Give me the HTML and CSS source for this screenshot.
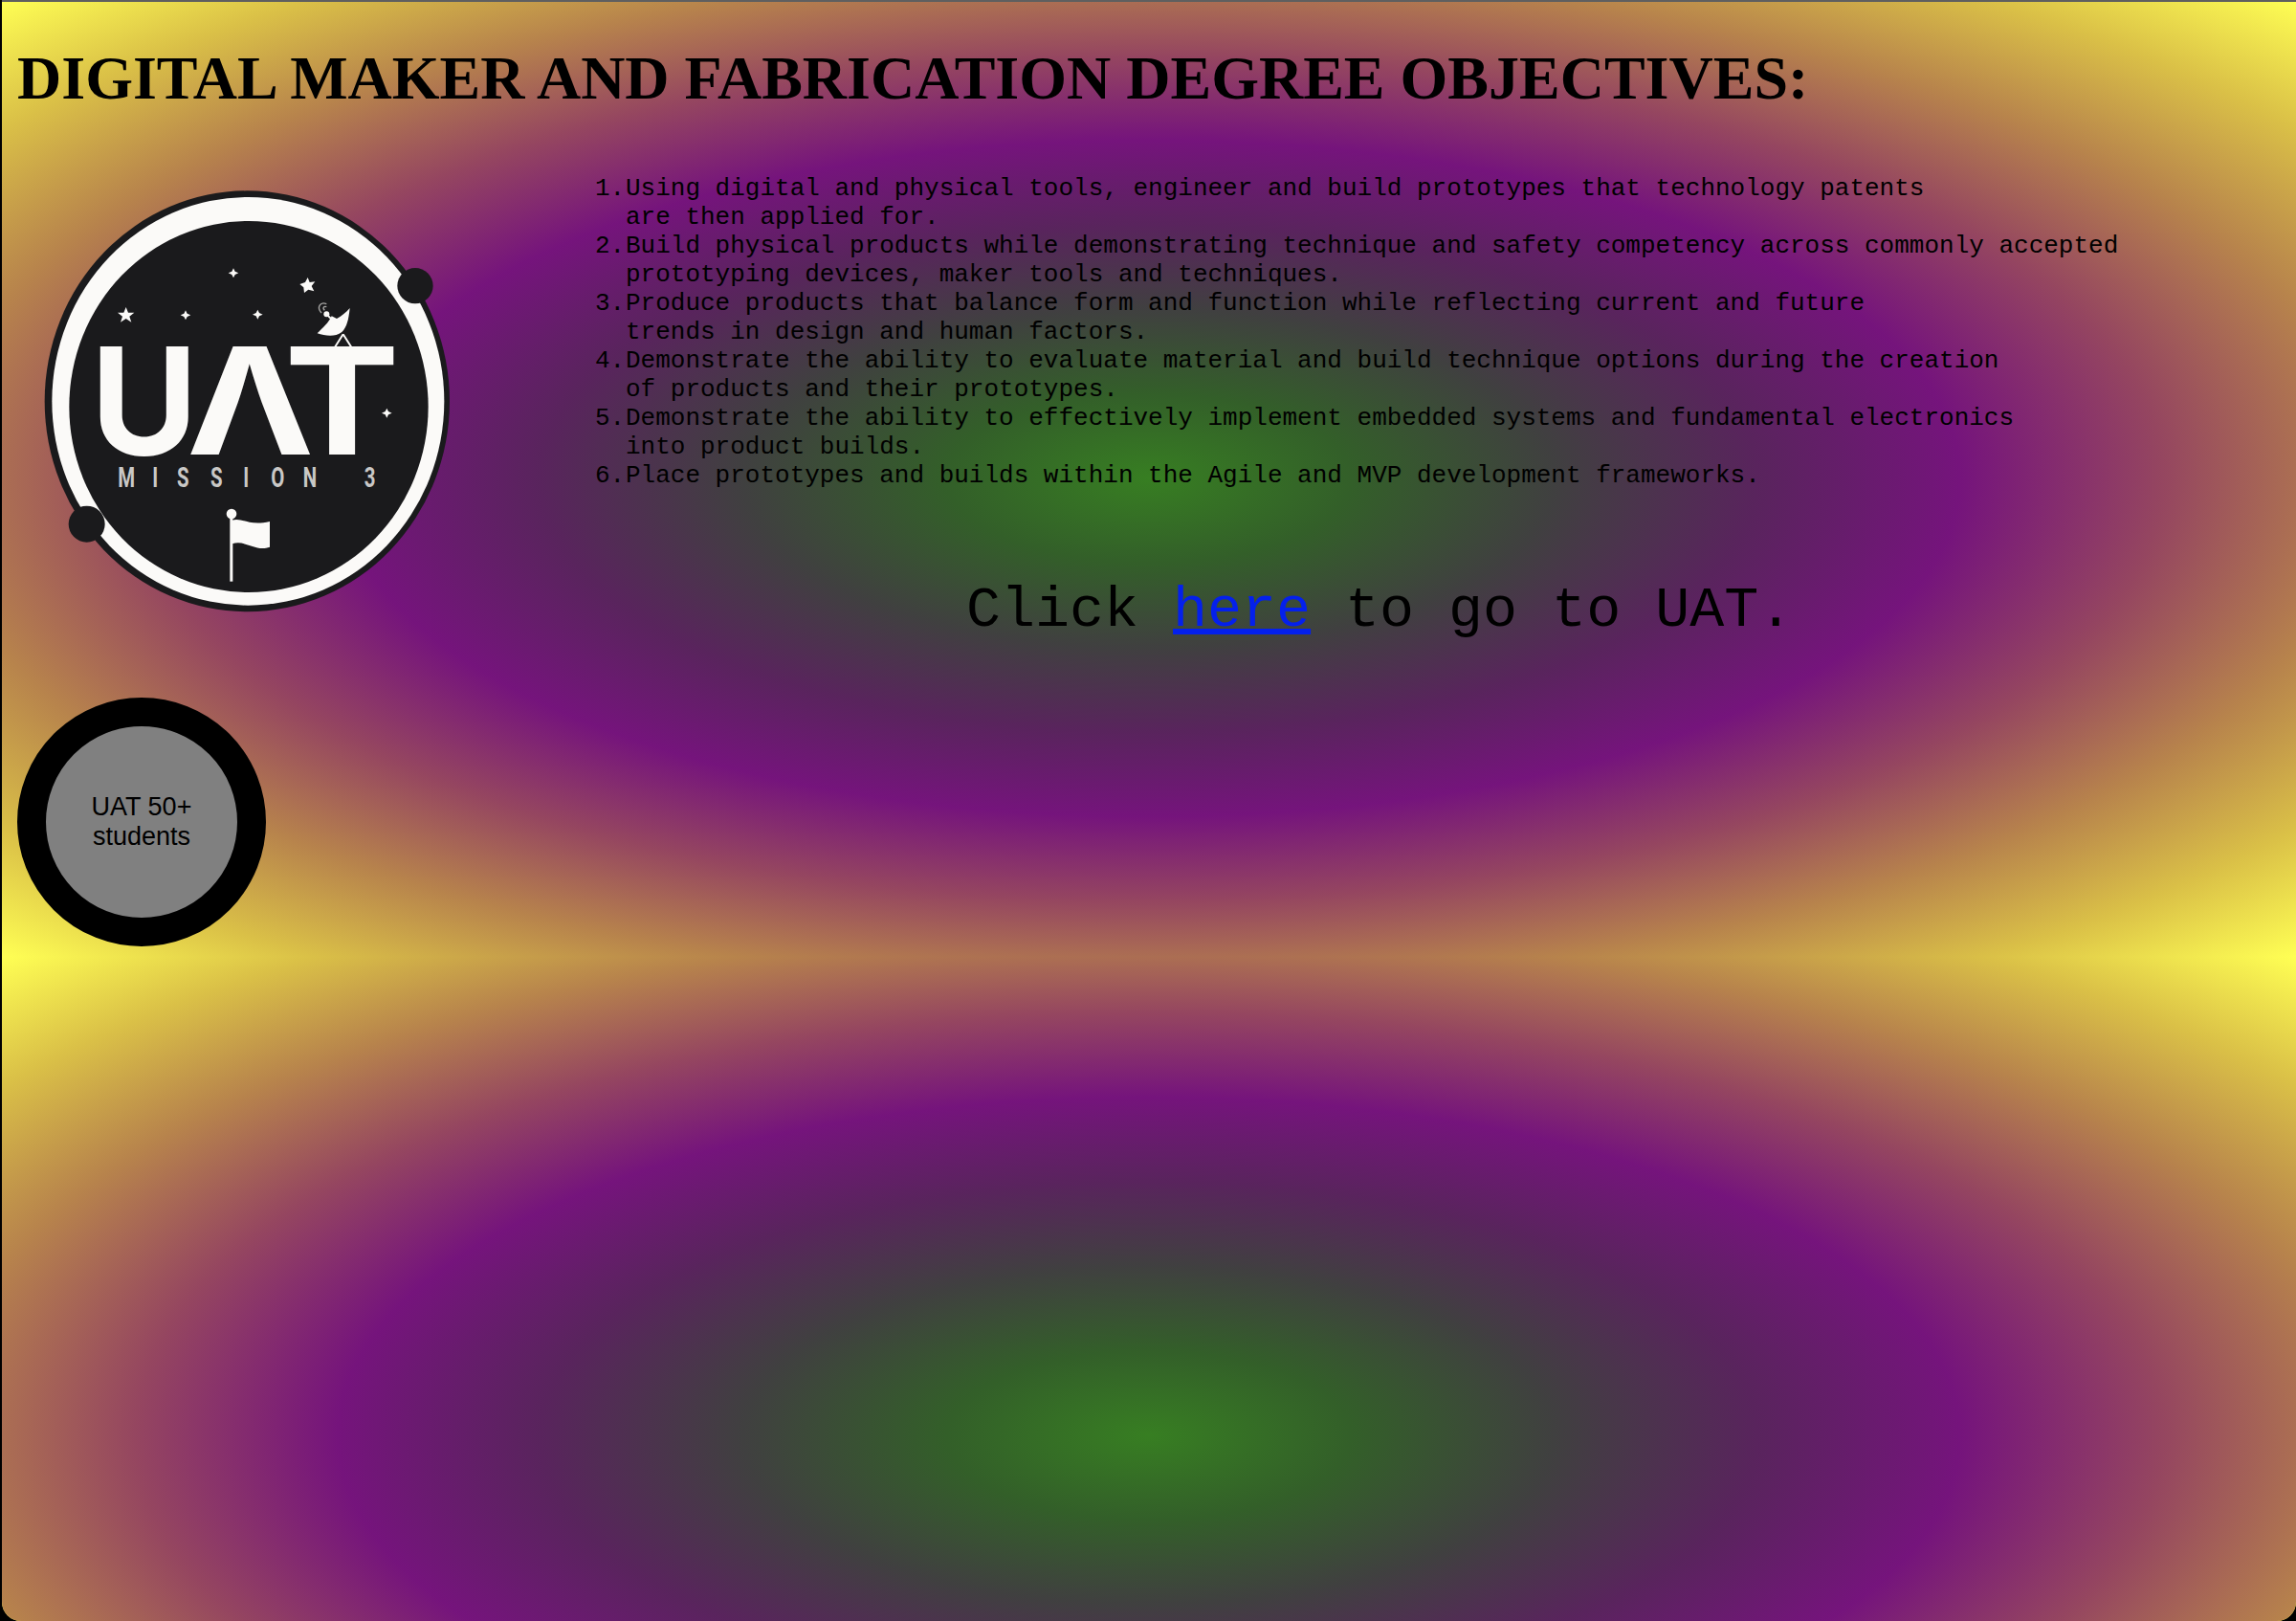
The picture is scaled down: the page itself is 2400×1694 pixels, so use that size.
FILE: index.html
```html
<!DOCTYPE html>
<html lang="en">
<head>
<meta charset="utf-8">
<title>Digital Maker and Fabrication Degree Objectives</title>
<link rel="stylesheet" href="styles.css">
</head>
<body>
<h1 class="title">DIGITAL MAKER AND FABRICATION DEGREE OBJECTIVES:</h1>
<div class="columns">
  <div class="side">
    <svg class="logo" viewBox="120 60 1320 1380" role="img" aria-label="UAT Mission 3">
      <ellipse class="ink" cx="775" cy="745" rx="635" ry="660"/>
      <ellipse class="paper" cx="778" cy="745" rx="615" ry="640"/>
      <ellipse class="ink" cx="780" cy="762" rx="563" ry="582"/>
      <circle class="ink" cx="1302" cy="383" r="56"/>
      <circle class="ink" cx="272" cy="1130" r="57"/>
      <text class="logo-big" x="284" y="912" textLength="336" lengthAdjust="spacingAndGlyphs">U</text>
      <text class="logo-big" x="585" y="912" textLength="400" lengthAdjust="spacingAndGlyphs">Λ</text>
      <text class="logo-big" x="892" y="912" textLength="362" lengthAdjust="spacingAndGlyphs">T</text>
      <text class="logo-small" y="1015" transform="scale(.68 1)" x="544 703 816 971 1122 1250 1397 1600 1680">MISSION 3</text>
      <polygon class="paper" points="395,450 402,467 421,467 406,479 412,497 395,486 378,497 384,479 369,467 388,467"/>
      <polygon class="paper" points="965,357 971,372 988,370 977,384 985,400 967,395 954,405 952,388 940,378 957,372"/>
      <path class="paper" d="M732 328l5 10 11 5-11 5-5 10-5-10-11-5 11-5zM582 460l5 10 11 5-11 5-5 10-5-10-11-5 11-5zM808 458l5 10 11 5-11 5-5 10-5-10-11-5 11-5zM1213 767l5 10 11 5-11 5-5 10-5-10-11-5 11-5z"/>
      <path class="paper" d="M1097 453C1093 490 1088 512 1072 528C1050 545 1020 540 995 532C1012 515 1030 500 1040 478L1056 486C1072 478 1085 466 1097 453Z"/>
      <circle class="paper" cx="1024" cy="472" r="9"/>
      <path class="logo-line" d="M1024 472L1050 498M1076 535L1044 585M1076 535L1108 585"/>
      <path class="logo-wave" d="M1008 468C992 450 1004 432 1024 440M1018 460C1010 452 1016 446 1024 449"/>
      <rect class="paper" x="721" y="1100" width="9" height="210"/>
      <circle class="paper" cx="726" cy="1098" r="16"/>
      <path class="paper" d="M728 1118C760 1108 780 1138 846 1122V1202C800 1218 770 1178 728 1192Z"/>
    </svg>
    <div class="badge">UAT 50+<br>students</div>
  </div>
  <div class="content">
    <ol class="objectives">
      <li>Using digital and physical tools, engineer and build prototypes that technology patents<br>are then applied for.</li>
      <li>Build physical products while demonstrating technique and safety competency across commonly accepted<br>prototyping devices, maker tools and techniques.</li>
      <li>Produce products that balance form and function while reflecting current and future<br>trends in design and human factors.</li>
      <li>Demonstrate the ability to evaluate material and build technique options during the creation<br>of products and their prototypes.</li>
      <li>Demonstrate the ability to effectively implement embedded systems and fundamental electronics<br>into product builds.</li>
      <li>Place prototypes and builds within the Agile and MVP development frameworks.</li>
    </ol>
    <p class="cta">Click <a class="cta-link" href="#">here</a> to go to UAT.</p>
  </div>
</div>
</body>
</html>
```
FILE: styles.css
```css
html {
  background: #000;
  height: 100%;
}

body {
  box-sizing: border-box;
  height: 1694px;
  margin: 0 0 0 2px;
  padding: 0 16px;
  border-top: 2px solid #5f5f5f;
  border-radius: 0 0 20px 20px;
  overflow: hidden;
  background-color: #ffff54;
  background-image: radial-gradient(#377e22, #335f29 12.5%, #404040 25%, #59245d 37.5%, #75147c 50%, #954660 62.5%, #b7834c 75%, #dac047 87.5%, #ffff54);
  background-size: 100% 1000px;
  background-repeat: repeat-y;
  background-origin: border-box;
  color: #000;
}

.title {
  margin: 43px 0 0;
  font: bold 64px/74px "Liberation Serif", "Times New Roman", serif;
  white-space: nowrap;
}

.columns {
  display: flex;
  align-items: flex-start;
}

.side {
  display: flex;
  flex: 0 0 604px;
  flex-direction: column;
  align-items: flex-start;
}

.logo {
  display: block;
  width: 440px;
  height: 460px;
  margin: 72px 0 0 22px;
}

.ink { fill: #1a1a1c; }
.paper { fill: #fbfaf8; }

.logo-big {
  fill: #fbfaf8;
  font: 700 468px "Inter", "Liberation Sans", sans-serif;
}

.logo-small {
  fill: #c9c8c6;
  font: 700 90px "Roboto", "Liberation Sans", sans-serif;
}

.logo-line {
  fill: none;
  stroke: #fbfaf8;
  stroke-width: 6;
}

.logo-wave {
  fill: none;
  stroke: #a9a8a6;
  stroke-width: 4;
}

.badge {
  display: flex;
  box-sizing: border-box;
  align-items: center;
  justify-content: center;
  width: 260px;
  height: 260px;
  margin-top: 78px;
  border: 30px solid #000;
  border-radius: 50%;
  background: #808080;
  font: 27px/31px "Liberation Sans", Arial, sans-serif;
  text-align: center;
}

.content {
  min-width: 0;
  padding-top: 63px;
}

.objectives {
  margin: 0;
  padding: 0 0 0 32px;
  counter-reset: item;
  list-style: none;
  font: 26px/30px "Liberation Mono", "Courier New", monospace;
  white-space: nowrap;
}

.objectives li {
  counter-increment: item;
}

.objectives li::before {
  content: counter(item) ".";
  display: inline-block;
  width: 32px;
  margin-left: -32px;
}

.cta {
  margin: 92px 0 0;
  padding-left: 388px;
  font: 60px/68px "Liberation Mono", "Courier New", monospace;
  white-space: nowrap;
}

.cta-link {
  color: #0420ec;
}
```
